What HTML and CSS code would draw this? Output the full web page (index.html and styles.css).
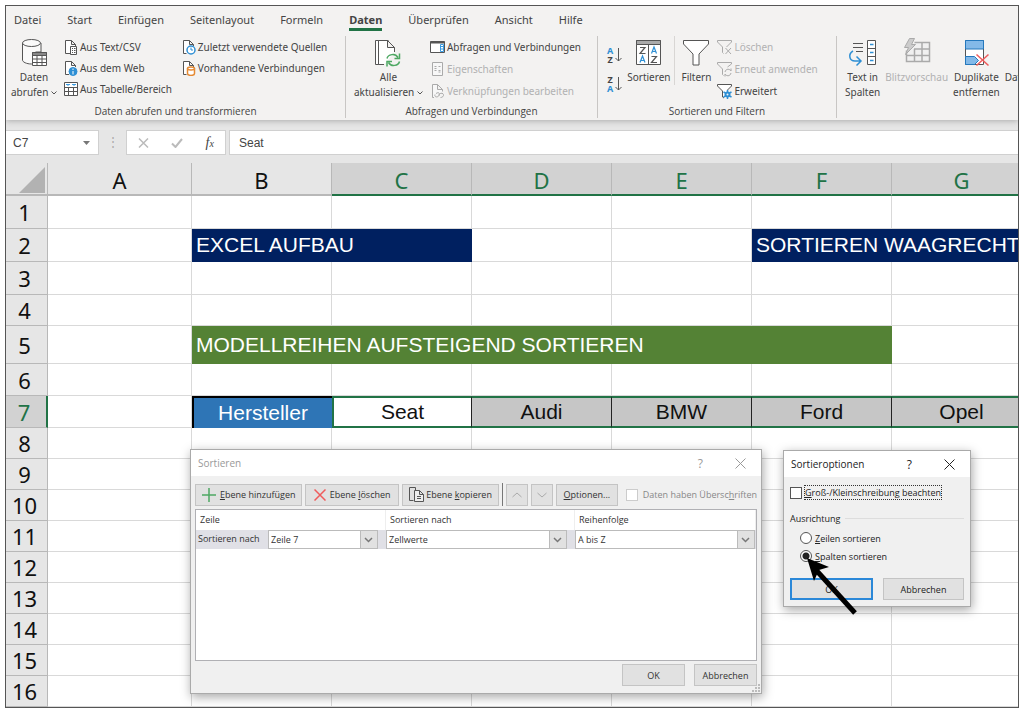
FILE: index.html
```html
<!DOCTYPE html>
<html lang="de">
<head>
  <meta charset="UTF-8">
  <meta name="viewport" content="width=device-width, initial-scale=1.0">
  <title>Sortieren waagrecht</title>
  <link rel="stylesheet" href="styles.css">
</head>
<body>
<div class="window">
  <nav class="tabs">
    <a href="#">Datei</a>
    <a href="#">Start</a>
    <a href="#">Einfügen</a>
    <a href="#">Seitenlayout</a>
    <a href="#">Formeln</a>
    <a href="#" class="active">Daten</a>
    <a href="#">Überprüfen</a>
    <a href="#">Ansicht</a>
    <a href="#">Hilfe</a>
  </nav>

  <div class="ribbon">
    <!-- Get and transform -->
    <section class="group group-get">
      <div class="tools">
        <button class="big">
          <svg width="28" height="30" viewBox="0 0 28 30" fill="none" stroke="#555"><path fill="#fafafa" d="M2.500 5v17c0 2 4 4 9 4h4V14h5.500V5"/><ellipse cx="11.500" cy="5" rx="9" ry="3.500" fill="#fafafa"/><path fill="#fff" d="M12.500 14.500h14v13h-14z"/><path fill="#888" d="M12.500 14.500h14v3h-14z"/><path d="M12.500 21h14M12.500 24.500h14M17 17.500v10M22 17.500v10"/></svg>
          <span>Daten<br>abrufen <svg class="caret" width="6" height="4" viewBox="0 0 6 4"><path d="M.5.5L3 3 5.500.5" fill="none" stroke="#555"/></svg></span>
        </button>
        <div class="list">
          <button class="small"><svg width="14" height="16" viewBox="0 0 14 16" fill="none" stroke="#555"><path fill="#fff" d="M6 14.500H1.500v-13h6l4 4V7M7.500 1.500v4h4"/><path fill="#fff" d="M6.500 7.500h6v8h-6z"/><path d="M8 9.500h1m1 0h1.500M8 11.500h1m1 0h1.500M8 13.500h1m1 0h1.500"/></svg>Aus Text/CSV</button>
          <button class="small"><svg width="14" height="16" viewBox="0 0 14 16" fill="none" stroke="#555"><path fill="#fff" d="M5 14.500H1.500v-13h6l4 4V7M7.500 1.500v4h4"/><circle cx="9" cy="11.500" r="4" fill="#2e8fd4" stroke="#2e8fd4"/><path stroke="#fff" d="M9 8.500v1.500M9 11v3.500"/></svg>Aus dem Web</button>
          <button class="small"><svg width="14" height="16" viewBox="0 0 14 16" fill="none" stroke="#555"><path fill="#fff" d="M.5 1.500h13v13H.5z"/><path stroke="#3b9be0" d="M2 3.500h4m2 0h4M4 3v2m6-2v2"/><path d="M.5 6.500h13M.5 10.500h13M4.500 6.500v8M9.500 6.500v8"/></svg>Aus Tabelle/Bereich</button>
        </div>
        <div class="list recent">
          <button class="small"><svg width="14" height="16" viewBox="0 0 14 16" fill="none" stroke="#555"><path fill="#fff" d="M4.500 14.500h-3v-13h6l4 4V7M7.500 1.500v4h4"/><circle cx="9" cy="11" r="4" fill="#fff" stroke="#2e8fd4" stroke-width="1.500"/><path stroke="#2e8fd4" d="M9 8.500V11h2"/></svg>Zuletzt verwendete Quellen</button>
          <button class="small"><svg width="14" height="16" viewBox="0 0 14 16" fill="none" stroke="#555"><path fill="#fff" d="M4.500 14.500h-3v-13h6l4 4V7M7.500 1.500v4h4"/><path fill="#fff" stroke="#e58a33" stroke-width="1.500" d="M5.500 8.500v5c0 2.500 7 2.500 7 0v-5"/><ellipse cx="9" cy="8.500" rx="3.500" ry="1.500" fill="#fff" stroke="#e58a33" stroke-width="1.500"/></svg>Vorhandene Verbindungen</button>
        </div>
      </div>
      <h2>Daten abrufen und transformieren</h2>
    </section>

    <!-- Queries and connections -->
    <section class="group group-query">
      <div class="tools">
        <button class="big">
          <svg width="28" height="30" viewBox="0 0 28 30" fill="none" stroke="#555"><path fill="#fff" d="M5 26.500H1.500v-24h13"/><path fill="#fff" d="M10 26.500H4.500v-24h9l7 7V14M13.500 2.500v7h7"/><g stroke="#4ea863" stroke-width="1.500"><path d="M13 20.500c1-4 8-6 11-1M25.500 15.500v5h-5M25.500 23.500c-1 4-8 6-11 1M13 28.500v-5h5"/></g></svg>
          <span>Alle<br>aktualisieren <svg class="caret" width="6" height="4" viewBox="0 0 6 4"><path d="M.5.5L3 3 5.500.5" fill="none" stroke="#555"/></svg></span>
        </button>
        <div class="list wide">
          <button class="small"><svg width="15" height="14" viewBox="0 0 15 14" fill="none" stroke="#555"><path fill="#fff" d="M.5 1.500h14v11H.5z"/><path d="M.5 2.500h14" stroke-width="2"/><path fill="#fff" stroke="#3b9be0" d="M10.500 4.500h3v7h-3zM11 6.500h2M11 9h2"/></svg>Abfragen und Verbindungen</button>
          <button class="small" disabled><svg width="15" height="16" viewBox="0 0 15 16" fill="none" stroke="#aaa"><path fill="#f7f7f7" d="M2.500 1.500h10v13h-10z"/><path d="M4.500 5.500h2m2 0h2M4.500 9.500h2m2 0h2M4.500 7.500h2M8.500 11h2"/></svg>Eigenschaften</button>
          <button class="small" disabled><svg width="15" height="16" viewBox="0 0 15 16" fill="none" stroke="#aaa"><path fill="#f7f7f7" d="M4 14.500H2.500v-13h5l5 5v2M7.500 1.500v5h5"/><path d="M6 10.500c3-2 4 0 3 2s-5 2-4-1M9 12.500c0-3 5-3 4.500 0-.5 2-3 2-3 2"/></svg>Verknüpfungen bearbeiten</button>
        </div>
      </div>
      <h2>Abfragen und Verbindungen</h2>
    </section>

    <!-- Sort and filter -->
    <section class="group group-sort">
      <div class="tools">
        <div class="az">
          <button aria-label="Aufsteigend"><span><b class="a">A</b><b>Z</b></span><svg width="7" height="14" viewBox="0 0 7 14"><path d="M3.500 0v13M.5 10l3 3 3-3" fill="none" stroke="#555"/></svg></button>
          <button aria-label="Absteigend"><span><b>Z</b><b class="a">A</b></span><svg width="7" height="14" viewBox="0 0 7 14"><path d="M3.500 0v13M.5 10l3 3 3-3" fill="none" stroke="#555"/></svg></button>
        </div>
        <button class="big sort">
          <svg width="28" height="30" viewBox="0 0 28 30" fill="none" stroke="#555"><path fill="#fff" d="M1.500 2.500h24v24h-24z"/><path fill="#aaa" d="M1.500 2.500h24v4h-24z"/><path d="M13.500 6.500v20"/><g stroke-width="1.200"><path d="M5 9.500h5l-5 6h5.500M16.500 18.500h5l-5 6h5.500"/><path stroke="#2e8fd4" d="M5 24.500l2.500-6.500 2.500 6.500M6 22.500h3M16.500 15.500L19 9l2.500 6.500M17.500 13.500h3"/></g></svg>
          <span>Sortieren</span>
        </button>
        <button class="big filter">
          <svg width="28" height="30" viewBox="0 0 28 30"><path fill="#fff" stroke="#555" d="M1.500 2.500h25v3.500l-9.500 10v11h-6V16L1.500 6z"/></svg>
          <span>Filtern</span>
        </button>
        <div class="list wide">
          <button class="small" disabled><svg width="15" height="16" viewBox="0 0 15 16" fill="none" stroke="#aaa"><path d="M6.500 14.500l-1-1V8L.5 3V1.500h14V3l-5 5M8.500 9l5.500 6M14 9l-5.500 6"/></svg>Löschen</button>
          <button class="small" disabled><svg width="15" height="16" viewBox="0 0 15 16" fill="none" stroke="#aaa"><path d="M6.500 14.500l-1-1V8L.5 3V1.500h14V3l-4 3M8 11c1-4 5-3 6-1V7.500M14 12c-1 4-5 3-6 1v2.500"/></svg>Erneut anwenden</button>
          <button class="small"><svg width="15" height="16" viewBox="0 0 15 16" fill="none" stroke="#555"><path fill="#fff" d="M7 15l-1.500-1V8L.5 3V1.500h14V3l-4 4"/><circle cx="10.500" cy="11.500" r="2" stroke="#2e8fd4" stroke-width="2"/><path stroke="#2e8fd4" stroke-width="1.500" d="M10.500 7v2m0 5v2M6.500 9l2 1m4 3l2 1M6.500 14l2-1m4-3l2-1"/></svg>Erweitert</button>
        </div>
      </div>
      <h2>Sortieren und Filtern</h2>
    </section>

    <!-- Data tools -->
    <section class="group group-data">
      <div class="tools">
        <button class="big">
          <svg width="32" height="30" viewBox="0 0 32 30" fill="none" stroke="#555"><path d="M6 5.500h10M6 9.500h10M9 13.500h7"/><path fill="#fff" d="M20.500 2.500h8v24h-8zM20.500 10.500h8M20.500 18.500h8"/><path stroke="#2e8fd4" stroke-width="1.500" d="M23 6.500h3.500M23 14.500h3.500M23 22.500h3.500M6 13c-5 3-4 10 2 10h5M9.500 18.500l4.500 4.500-4.500 4.500"/></svg>
          <span>Text in<br>Spalten</span>
        </button>
        <button class="big" disabled>
          <svg width="30" height="30" viewBox="0 0 30 30" fill="none" stroke="#aaa"><path fill="#f0f0f0" stroke-width="1.500" d="M4.500 12.500v11h23v-19h-15M12 11h15.500M4.500 17.500h23M12.500 11v12.500M20 5v18.500"/><path fill="#ccc" d="M7.500.5h5l-3 6h4l-10 10 3-7h-4z"/></svg>
          <span>Blitzvorschau</span>
        </button>
        <button class="big">
          <svg width="28" height="30" viewBox="0 0 28 30" fill="none"><path fill="#fff" stroke="#555" d="M3.500 2.500h18v24h-18z"/><path fill="#83b9e8" stroke="#2478bd" d="M3.500 2.500h18V11h-18zM3.500 18.500h9l4 4-4 4h-9z"/><path stroke="#ef5b5b" stroke-width="1.500" d="M14.500 16.500l12 11m0-11l-12 11"/></svg>
          <span>Duplikate<br>entfernen</span>
        </button>
        <button class="big">
          <svg width="28" height="30" viewBox="0 0 28 30"></svg>
          <span>Datenüberprüfung</span>
        </button>
      </div>
    </section>
  </div>

  <div class="formula-bar">
    <div class="name-box">
      <input type="text" value="C7" aria-label="Namenfeld">
      <svg width="7" height="4" viewBox="0 0 7 4"><path d="M0 0h7L3.500 4z" fill="#777"/></svg>
    </div>
    <span class="dots">⋮</span>
    <div class="formula-buttons">
      <button aria-label="Abbrechen"><svg width="11" height="10" viewBox="0 0 11 10"><path d="M1 .5l9 9m0-9l-9 9" stroke="#bbb" stroke-width="1.500"/></svg></button>
      <button aria-label="Eingeben"><svg width="12" height="10" viewBox="0 0 12 10"><path d="M1 5.500L4.500 9 11 1" fill="none" stroke="#bbb" stroke-width="2"/></svg></button>
      <button class="fx"><i>f</i><small>x</small></button>
    </div>
    <input class="formula" type="text" value="Seat" aria-label="Bearbeitungsleiste">
  </div>

  <div class="sheet">
    <table>
      <colgroup><col class="col-num"><col class="col-a"><col><col><col><col><col><col><col></colgroup>
      <thead>
        <tr><th class="corner"><svg width="26" height="26" viewBox="0 0 26 26"><path d="M26 0v26H0z" fill="#b2b2b2"/></svg></th><th>A</th><th>B</th><th class="sel">C</th><th class="sel">D</th><th class="sel">E</th><th class="sel">F</th><th class="sel">G</th><th class="sel"></th></tr>
      </thead>
      <tbody>
        <tr class="tall"><th>1</th><td></td><td></td><td></td><td></td><td></td><td></td><td></td><td></td></tr>
        <tr class="tall"><th>2</th><td></td><td class="navy" colspan="2">EXCEL AUFBAU</td><td></td><td></td><td class="navy" colspan="3">SORTIEREN WAAGRECHT</td></tr>
        <tr class="tall"><th>3</th><td></td><td></td><td></td><td></td><td></td><td></td><td></td><td></td></tr>
        <tr><th>4</th><td></td><td></td><td></td><td></td><td></td><td></td><td></td><td></td></tr>
        <tr class="title"><th>5</th><td></td><td class="green" colspan="5">MODELLREIHEN AUFSTEIGEND SORTIEREN</td><td></td><td></td></tr>
        <tr class="mid"><th>6</th><td></td><td></td><td></td><td></td><td></td><td></td><td></td><td></td></tr>
        <tr class="mid makers"><th class="sel">7</th><td></td><td class="maker-head">Hersteller</td><td class="maker current">Seat</td><td class="maker">Audi</td><td class="maker">BMW</td><td class="maker">Ford</td><td class="maker">Opel</td><td class="maker"></td></tr>
        <tr><th>8</th><td></td><td></td><td></td><td></td><td></td><td></td><td></td><td></td></tr>
        <tr><th>9</th><td></td><td></td><td></td><td></td><td></td><td></td><td></td><td></td></tr>
        <tr><th>10</th><td></td><td></td><td></td><td></td><td></td><td></td><td></td><td></td></tr>
        <tr><th>11</th><td></td><td></td><td></td><td></td><td></td><td></td><td></td><td></td></tr>
        <tr><th>12</th><td></td><td></td><td></td><td></td><td></td><td></td><td></td><td></td></tr>
        <tr><th>13</th><td></td><td></td><td></td><td></td><td></td><td></td><td></td><td></td></tr>
        <tr><th>14</th><td></td><td></td><td></td><td></td><td></td><td></td><td></td><td></td></tr>
        <tr><th>15</th><td></td><td></td><td></td><td></td><td></td><td></td><td></td><td></td></tr>
        <tr><th>16</th><td></td><td></td><td></td><td></td><td></td><td></td><td></td><td></td></tr>
      </tbody>
    </table>
  </div>

  <div class="dialog sort-dialog" role="dialog" aria-label="Sortieren">
    <div class="dialog-title">
      <span>Sortieren</span>
      <button aria-label="Hilfe">?</button>
      <button aria-label="Schließen"><svg width="11" height="11" viewBox="0 0 11 11"><path d="M.5.5l10 10m0-10l-10 10" stroke="currentColor"/></svg></button>
    </div>
    <div class="dialog-body">
      <div class="levels">
        <button class="btn add"><svg width="14" height="14" viewBox="0 0 14 14"><path d="M7 0v14M0 7h14" stroke="#4ea863" stroke-width="1.500"/></svg><span><u>E</u>bene hinzufügen</span></button>
        <button class="btn delete"><svg width="12" height="12" viewBox="0 0 12 12"><path d="M.5.5l11 11m0-11l-11 11" stroke="#ef5b5b" stroke-width="1.500"/></svg><span>Ebene <u>l</u>öschen</span></button>
        <button class="btn copy"><svg width="15" height="15" viewBox="0 0 15 15" fill="none" stroke="#555"><path d="M4.500 13.500h-4V.5h6v3"/><path fill="#eee" d="M5.500 3.500h5l4 4v7h-9zM10.500 3.500v4h4"/><path d="M8 9.500h4M8 11.500h4"/></svg><span>Ebene <u>k</u>opieren</span></button>
        <span class="bar"></span>
        <button class="btn step" aria-label="Nach oben" disabled><svg width="10" height="6" viewBox="0 0 10 6"><path d="M.5 5L5 1l4.500 4" fill="none" stroke="#aaa"/></svg></button>
        <button class="btn step" aria-label="Nach unten" disabled><svg width="10" height="6" viewBox="0 0 10 6"><path d="M.5 1L5 5l4.500-4" fill="none" stroke="#aaa"/></svg></button>
        <button class="btn options"><span><u>O</u>ptionen...</span></button>
        <label class="headings"><input type="checkbox" disabled><span>Daten haben Übersc<u>h</u>riften</span></label>
      </div>
      <div class="criteria">
        <div class="criteria-row criteria-head"><span>Zeile</span><span>Sortieren nach</span><span>Reihenfolge</span></div>
        <div class="criteria-row criteria-level">
          <div class="cell"><label for="line">Sortieren nach</label><div class="combo"><select id="line"><option>Zeile 7</option></select><svg width="9" height="6" viewBox="0 0 9 6"><path d="M1 1l3.500 3.500L8 1" fill="none" stroke="#777" stroke-width="1.500"/></svg></div></div>
          <div class="cell"><div class="combo"><select aria-label="Sortieren nach"><option>Zellwerte</option></select><svg width="9" height="6" viewBox="0 0 9 6"><path d="M1 1l3.500 3.500L8 1" fill="none" stroke="#777" stroke-width="1.500"/></svg></div></div>
          <div class="cell"><div class="combo"><select aria-label="Reihenfolge"><option>A bis Z</option></select><svg width="9" height="6" viewBox="0 0 9 6"><path d="M1 1l3.500 3.500L8 1" fill="none" stroke="#777" stroke-width="1.500"/></svg></div></div>
        </div>
      </div>
      <div class="dialog-actions">
        <button class="btn">OK</button>
        <button class="btn">Abbrechen</button>
      </div>
    </div>
    <svg class="grip" width="9" height="9" viewBox="0 0 9 9"><path d="M6 0h2v2H6zM3 3h2v2H3zM6 3h2v2H6zM0 6h2v2H0zM3 6h2v2H3zM6 6h2v2H6z" fill="#bbb"/></svg>
  </div>

  <div class="dialog options-dialog" role="dialog" aria-label="Sortieroptionen">
    <div class="dialog-title">
      <span>Sortieroptionen</span>
      <button aria-label="Hilfe">?</button>
      <button aria-label="Schließen"><svg width="11" height="11" viewBox="0 0 11 11"><path d="M.5.5l10 10m0-10l-10 10" stroke="currentColor"/></svg></button>
    </div>
    <div class="dialog-body">
      <label class="case"><input type="checkbox"><span><u>G</u>roß-/Kleinschreibung beachten</span></label>
      <fieldset>
        <legend>Ausrichtung</legend>
        <label><input type="radio" name="direction"><span><u>Z</u>eilen sortieren</span></label>
        <label><input type="radio" name="direction" checked><span><u>S</u>palten sortieren</span></label>
      </fieldset>
      <div class="dialog-actions">
        <button class="btn default">OK</button>
        <button class="btn">Abbrechen</button>
      </div>
    </div>
    <svg class="pointer" width="54" height="60" viewBox="0 0 54 60"><path d="M11 14l39 43" stroke="#000" stroke-width="5"/><path d="M2 2l22 9-10 3-5 11z" fill="#000"/></svg>
  </div>
</div>
</body>
</html>
```

FILE: styles.css
```css
* {
    box-sizing: border-box;
}
body {
    margin: 0;
    padding: 5px 5px 0;
    background: #fff;
    color: #444;
    font-family: "Noto Sans", "Open Sans", sans-serif;
    font-size: 11px;
}
button, input, select {
    font: inherit;
    color: inherit;
    margin: 0;
}
button {
    padding: 0;
    border: none;
    background: none;
    white-space: nowrap;
}
svg {
    display: block;
    flex: none;
}
.window {
    position: relative;
    overflow: hidden;
    border: 1px solid #555;
    background: #e6e6e6;
}

/* tabs */
.tabs {
    display: flex;
    gap: 26px;
    height: 30px;
    padding: 4px 8px 0;
    background: #f3f2f1;
}
.tabs a {
    height: 21px;
    line-height: 20px;
    color: #444;
    text-decoration: none;
}
.tabs .active {
    font-weight: bold;
    border-bottom: 3px solid #217346;
}

/* ribbon */
.ribbon {
    display: flex;
    height: 84px;
    background: #f3f2f1;
    box-shadow: 0 1px 6px #aaa;
    clip-path: inset(0 0 -10px);
}
.group {
    display: flex;
    flex-direction: column;
    flex: none;
    justify-content: space-between;
    margin-bottom: 2px;
    border-right: 1px solid #c8c6c4;
}
.group-get {
    width: 340px;
}
.group-query {
    width: 252px;
}
.group-sort {
    width: 239px;
}
.group-data {
    border: none;
}
.group h2 {
    margin: 0;
    font-family: "Open Sans", sans-serif;
    font-size: 10px;
    line-height: 13px;
    font-weight: normal;
    text-align: center;
}
.tools {
    display: flex;
    align-items: flex-start;
}
.big {
    display: flex;
    flex-direction: column;
    align-items: center;
    padding-top: 2px;
    font-size: 10px;
    line-height: 15px;
}
.big > span {
    margin-top: 2px;
}
.caret {
    display: inline-block;
    vertical-align: middle;
}
.list {
    display: flex;
    flex-direction: column;
    align-items: flex-start;
}
.small {
    display: flex;
    align-items: center;
    gap: 2px;
    height: 21px;
    font-size: 10px;
}
.wide .small {
    height: 22px;
}
button:disabled {
    color: #b1b1b1;
}
.group-get .tools {
    padding-left: 5px;
}
.group-get .list {
    margin-left: 7px;
}
.group-get .recent {
    margin-left: 10px;
}
.group-query .tools {
    padding-left: 8px;
}
.group-query .list {
    margin-left: 7px;
}
.az {
    display: flex;
    flex-direction: column;
    gap: 10px;
    margin: 9px 5px 0 9px;
}
.az button {
    display: flex;
    align-items: center;
    gap: 2px;
    height: 19px;
}
.az b {
    display: block;
    font-size: 9px;
    line-height: 9px;
}
.az .a {
    color: #2e8fd4;
}
.filter {
    margin: 0 6px 0 4px;
    padding-left: 6px;
    border-left: 1px solid #d8d6d4;
}
.group-data .tools {
    gap: 5px;
    padding-left: 8px;
}

/* formula bar */
.formula-bar {
    display: flex;
    height: 25px;
    margin: 10px 0 8px;
    font-family: "Liberation Sans", Arial, sans-serif;
    font-size: 12px;
}
.name-box {
    display: flex;
    align-items: center;
    width: 93px;
    padding: 0 8px 0 7px;
    border: 1px solid #d0d0d0;
    border-left: none;
    background: #fff;
}
.name-box input {
    flex: 1;
    min-width: 0;
    padding: 0;
    border: none;
}
.dots {
    width: 27px;
    line-height: 24px;
    text-align: center;
    color: #aaa;
}
.formula-buttons {
    display: flex;
    align-items: center;
    justify-content: space-around;
    width: 100px;
    margin-right: 3px;
    border: 1px solid #d0d0d0;
    background: #fff;
}
.fx {
    font-family: "Liberation Serif", serif;
    font-size: 14px;
}
.fx small {
    font-size: 10px;
    font-style: italic;
}
.formula {
    flex: 1;
    padding: 0 9px;
    border: 1px solid #d0d0d0;
    border-right: none;
    background: #fff;
}

/* sheet */
.sheet {
    overflow: hidden;
    background: #fff;
}
.sheet table {
    width: 1166px;
    table-layout: fixed;
    border-spacing: 0;
    color: #111;
}
.sheet col {
    width: 140px;
}
.sheet .col-num {
    width: 42px;
}
.sheet .col-a {
    width: 144px;
}
.sheet th {
    padding: 0;
    border-right: 1px solid #b8b8b8;
    border-bottom: 1px solid #b8b8b8;
    background: #e6e6e6;
    font-family: "Noto Sans", sans-serif;
    font-size: 22px;
    line-height: 24px;
    font-weight: normal;
}
.sheet thead th {
    height: 33px;
    padding-top: 2px;
    border-bottom: 2px solid #b8b8b8;
}
.sheet tbody th {
    padding-right: 4px;
}
.sheet th.corner {
    padding-left: 13px;
}
.sheet th.sel {
    background: #d2d2d2;
    color: #217346;
    border-bottom-color: #217346;
}
.sheet tbody th.sel {
    border-right: 2px solid #217346;
    border-bottom-color: #b8b8b8;
}
.sheet td {
    padding: 0 4px;
    border-right: 1px solid #d9d9d9;
    border-bottom: 1px solid #d9d9d9;
    font-family: "Liberation Sans", Arial, sans-serif;
    font-size: 21px;
    line-height: 28px;
    white-space: nowrap;
}
.sheet tr {
    height: 31px;
}
.sheet .mid {
    height: 32px;
}
.sheet .tall {
    height: 33px;
}
.sheet .title {
    height: 38px;
}
.sheet .navy {
    background: #002060;
    border-color: #002060;
    color: #fff;
}
.sheet .green {
    background: #548235;
    border-color: #548235;
    color: #fff;
}
.sheet .maker-head {
    background: #2e75b6;
    border: 2px solid #000;
    border-width: 2px 0 0 2px;
    color: #fff;
    text-align: center;
}
.sheet .maker {
    background: #c6c6c6;
    border-top: 2px solid #217346;
    border-bottom: 2px solid #217346;
    border-right: 1px solid #222;
    text-align: center;
}
.sheet .current {
    background: #fff;
    border-left: 2px solid #217346;
}

/* dialogs */
.dialog {
    position: absolute;
    border: 1px solid #aaa;
    background: #f0f0f0;
    box-shadow: 1px 3px 10px rgba(0, 0, 0, 0.35);
    font-family: "Open Sans", "Noto Sans", sans-serif;
    font-size: 9px;
    color: #333;
}
.dialog-title {
    display: flex;
    align-items: center;
    height: 26px;
    padding: 0 15px 0 7px;
    background: #fff;
    font-size: 10px;
}
.dialog-title span {
    flex: 1;
}
.dialog-title button {
    margin-left: 32px;
    font-size: 12px;
}
.btn {
    display: flex;
    align-items: center;
    justify-content: center;
    gap: 4px;
    height: 22px;
    border: 1px solid #c4c4c4;
    background: #e1e1e1;
}
.dialog-actions {
    display: flex;
}
.dialog label {
    display: flex;
    align-items: center;
}
.dialog input {
    appearance: none;
    flex: none;
    width: 12px;
    height: 12px;
    border: 1px solid #555;
    background: #fff;
}
.sort-dialog {
    left: 184px;
    top: 443px;
    width: 572px;
}
.sort-dialog .dialog-title {
    color: #999;
}
.sort-dialog .dialog-body {
    padding: 7px 4px;
}
.levels {
    display: flex;
    align-items: center;
    gap: 3px;
    margin-bottom: 3px;
}
.add {
    width: 108px;
}
.delete {
    width: 94px;
}
.copy {
    width: 98px;
}
.copy svg {
    margin-right: -2px;
}
.bar {
    width: 1px;
    height: 23px;
    background: #777;
}
.step {
    width: 22px;
}
.options {
    width: 62px;
    margin-right: 5px;
}
.sort-dialog .headings {
    gap: 5px;
    color: #888;
    white-space: nowrap;
}
.sort-dialog .headings input {
    border-color: #ccc;
}
.criteria {
    height: 152px;
    border: 1px solid #b0b0b4;
    background: #fff;
}
.criteria-row {
    display: grid;
    grid-template-columns: 190px 189px 1fr;
}
.criteria-head {
    height: 20px;
    line-height: 20px;
}
.criteria-head span {
    padding-left: 4px;
    border-right: 1px solid #eee;
}
.criteria-level {
    height: 19px;
    background: #e0e0e6;
}
.cell {
    display: flex;
    padding-right: 8px;
}
.cell:last-child {
    padding-right: 1px;
}
.cell label {
    width: 72px;
    padding: 0 0 3px 2px;
    white-space: nowrap;
}
.combo {
    display: flex;
    align-items: center;
    flex: 1;
    padding-right: 4px;
    border: 1px solid #bbb;
    background: linear-gradient(to left, #e1e1e1 16px, #bbb 16px, #bbb 17px, #fff 17px);
}
.combo select {
    appearance: none;
    flex: 1;
    min-width: 0;
    padding: 0 2px;
    border: none;
    background: none;
}
.sort-dialog .dialog-actions {
    justify-content: flex-end;
    gap: 9px;
    margin-top: 3px;
}
.sort-dialog .dialog-actions .btn {
    width: 63px;
}
.grip {
    position: absolute;
    right: 0;
    bottom: 0;
}
.options-dialog {
    left: 777px;
    top: 444px;
    width: 188px;
    color: #222;
}
.options-dialog .dialog-body {
    padding: 8px 6px 6px;
}
.options-dialog .case input {
    margin-right: 2px;
}
.options-dialog .case span {
    border: 1px dotted #333;
    line-height: 13px;
    white-space: nowrap;
}
.options-dialog fieldset {
    margin: 12px 0 13px;
    padding: 4px 0 0 10px;
    border: none;
    border-top: 1px solid #ddd;
}
.options-dialog legend {
    margin-left: -10px;
    padding: 0 5px 0 0;
}
.options-dialog fieldset label {
    gap: 3px;
    height: 18px;
}
.options-dialog input[type="radio"] {
    border-radius: 50%;
}
.options-dialog input[type="radio"]:checked {
    background: radial-gradient(#222 0 3px, #fff 4px);
}
.options-dialog .dialog-actions {
    gap: 10px;
}
.options-dialog .btn {
    flex: 1;
}
.options-dialog .default {
    border: 2px solid #2b88d8;
}
.pointer {
    position: absolute;
    left: 21px;
    top: 105px;
}
```
